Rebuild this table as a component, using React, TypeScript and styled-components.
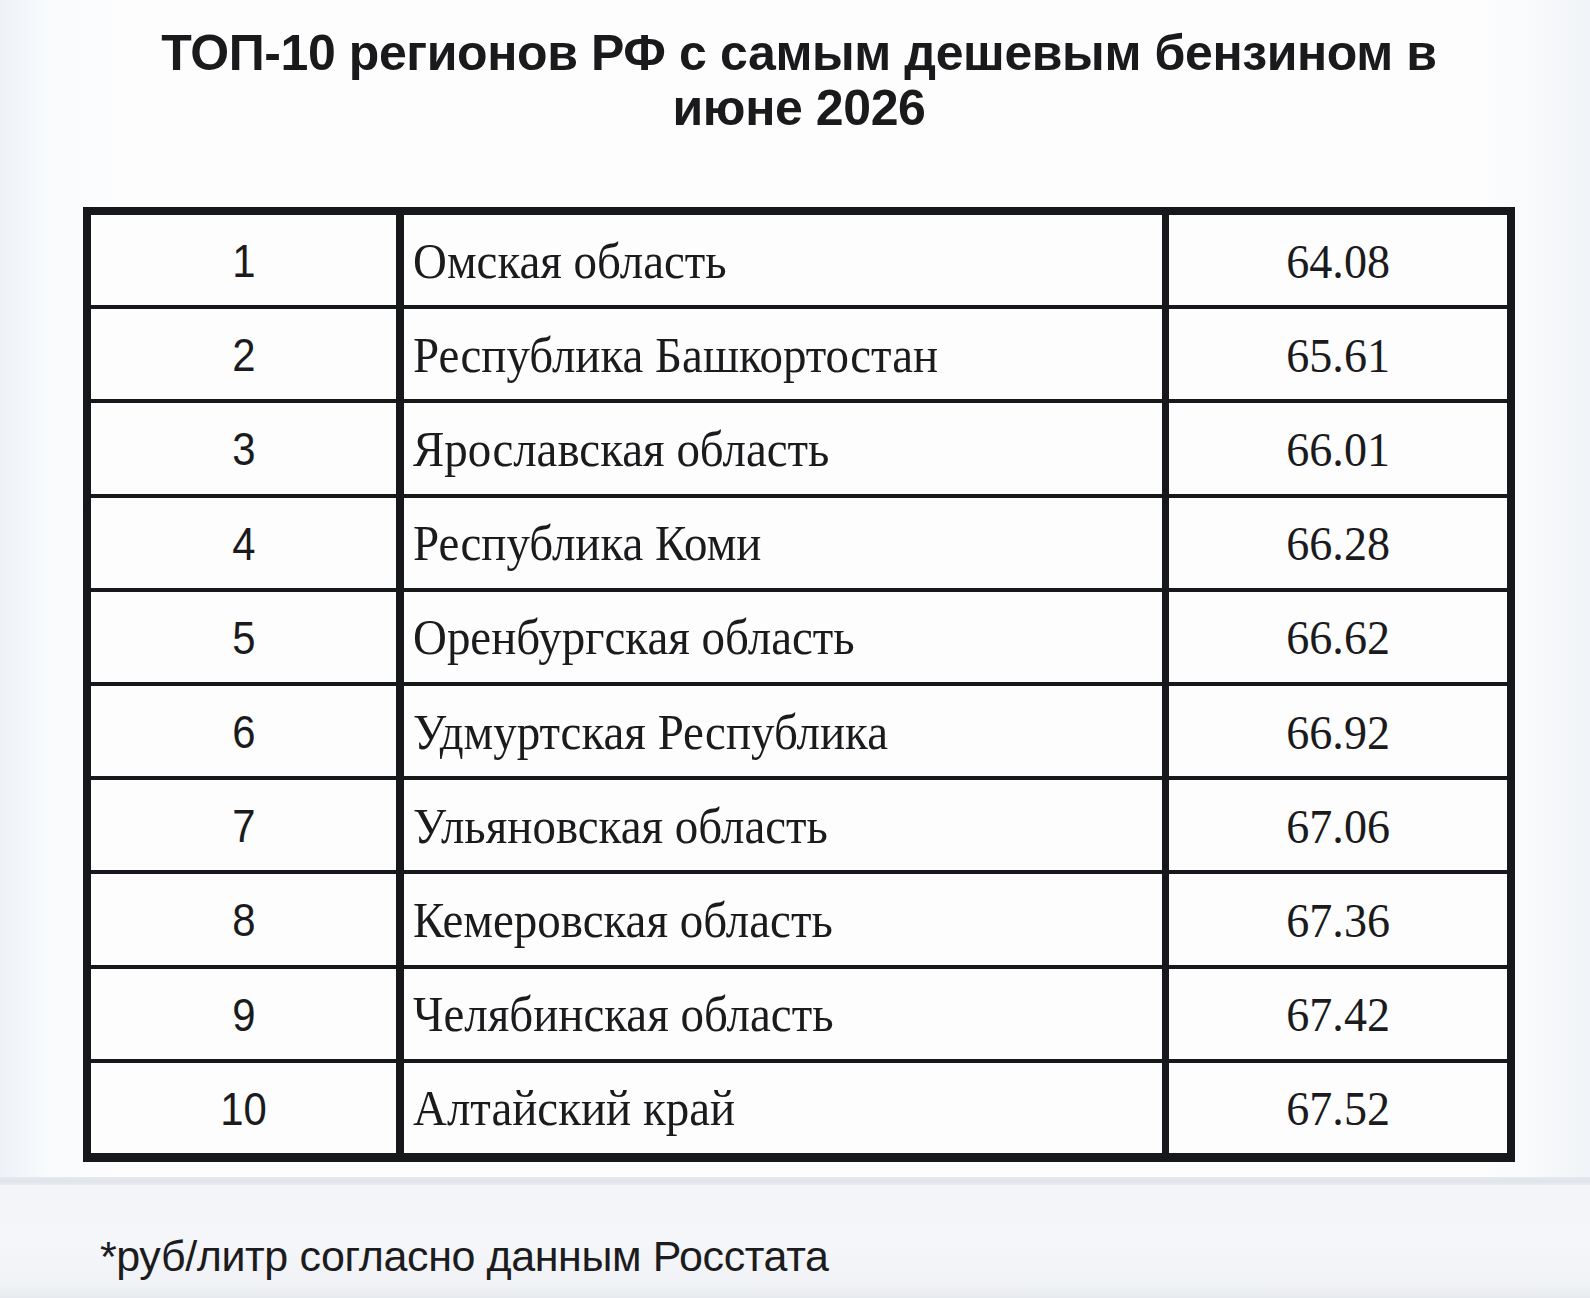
import React from "react";
import styled, { createGlobalStyle } from "styled-components";

const GlobalStyle = createGlobalStyle`
  html, body {
    margin: 0;
    padding: 0;
  }
  body {
    background: #f4f6f9;
    font-family: "Liberation Sans", Arial, sans-serif;
    color: #1b1b1d;
  }
  * { box-sizing: border-box; }
`;

const Page = styled.div`
  width: 1590px;
  min-height: 1298px;
  display: flex;
  flex-direction: column;
  overflow: hidden;
`;

const MainPanel = styled.section`
  height: 1177px;
  display: flex;
  flex-direction: column;
  background: linear-gradient(
    90deg,
    #eef2f7 0px,
    #f9fbfd 50px,
    #fdfdfe 120px,
    #fdfdfe 1480px,
    #f7f9fb 1540px,
    #f1f4f8 1590px
  );
`;

const Title = styled.h1`
  margin: 26px 0 0 83px;
  width: 1432px;
  font-family: "Liberation Sans", Arial, sans-serif;
  font-weight: 700;
  font-size: 50px;
  line-height: 55px;
  letter-spacing: -0.4px;
  text-align: center;
  color: #1a1a1c;
`;

const Table = styled.div`
  margin: 71px 0 0 83px;
  width: 1432px;
  display: grid;
  grid-template-columns: 305px 758px 338px;
  grid-auto-rows: 90.2px;
  column-gap: 7.5px;
  row-gap: 4px;
  background: #16181c;
  border-style: solid;
  border-color: #16181c;
  border-width: 8px 8px 9px 8px;
`;

const Cell = styled.div<{ $align: "center" | "left" }>`
  background: #fdfdfe;
  display: flex;
  align-items: center;
  justify-content: ${(p) => (p.$align === "center" ? "center" : "flex-start")};
  padding-left: ${(p) => (p.$align === "left" ? "9px" : "0")};
  padding-top: 2px;
  overflow: hidden;
`;

const RankText = styled.span`
  display: inline-block;
  font-family: "Liberation Sans", Arial, sans-serif;
  font-size: 46px;
  line-height: 1;
  color: #1b1b1d;
  transform: scaleX(0.91);
  transform-origin: center center;
`;

const RegionText = styled.span`
  display: inline-block;
  font-family: "Liberation Serif", "Times New Roman", serif;
  font-size: 51px;
  line-height: 1;
  color: #1b1b1d;
  white-space: nowrap;
  transform: scaleX(0.92);
  transform-origin: left center;
`;

const ValueText = styled.span`
  display: inline-block;
  font-family: "Liberation Serif", "Times New Roman", serif;
  font-size: 49px;
  line-height: 1;
  color: #1b1b1d;
  transform: scaleX(0.94);
  transform-origin: center center;
`;

const Band = styled.div`
  height: 8px;
  background: linear-gradient(180deg, #e6eaef 0%, #dfe4ea 50%, #e8ecf0 100%);
`;

const Footer = styled.footer`
  flex: 1;
  padding: 46px 0 0 100px;
  background: linear-gradient(
    180deg,
    #f3f5f8 0px,
    #f4f6f9 60px,
    #f0f2f5 100px,
    #e7eaee 113px
  );
`;

const Note = styled.p`
  margin: 0;
  font-family: "Liberation Sans", Arial, sans-serif;
  font-size: 43px;
  line-height: 50px;
  letter-spacing: -0.4px;
  color: #1c1c1e;
`;

const rows: [number, string, string][] = [
  [1, "Омская область", "64.08"],
  [2, "Республика Башкортостан", "65.61"],
  [3, "Ярославская область", "66.01"],
  [4, "Республика Коми", "66.28"],
  [5, "Оренбургская область", "66.62"],
  [6, "Удмуртская Республика", "66.92"],
  [7, "Ульяновская область", "67.06"],
  [8, "Кемеровская область", "67.36"],
  [9, "Челябинская область", "67.42"],
  [10, "Алтайский край", "67.52"],
];

export default function App() {
  return (
    <>
      <GlobalStyle />
      <Page>
        <MainPanel>
          <Title>
            ТОП-10 регионов РФ с самым дешевым бензином в
            <br />
            июне 2026
          </Title>
          <Table>
            {rows.map(([rank, region, price]) => (
              <React.Fragment key={rank}>
                <Cell $align="center">
                  <RankText>{rank}</RankText>
                </Cell>
                <Cell $align="left">
                  <RegionText>{region}</RegionText>
                </Cell>
                <Cell $align="center">
                  <ValueText>{price}</ValueText>
                </Cell>
              </React.Fragment>
            ))}
          </Table>
        </MainPanel>
        <Band />
        <Footer>
          <Note>*руб/литр согласно данным Росстата</Note>
        </Footer>
      </Page>
    </>
  );
}
